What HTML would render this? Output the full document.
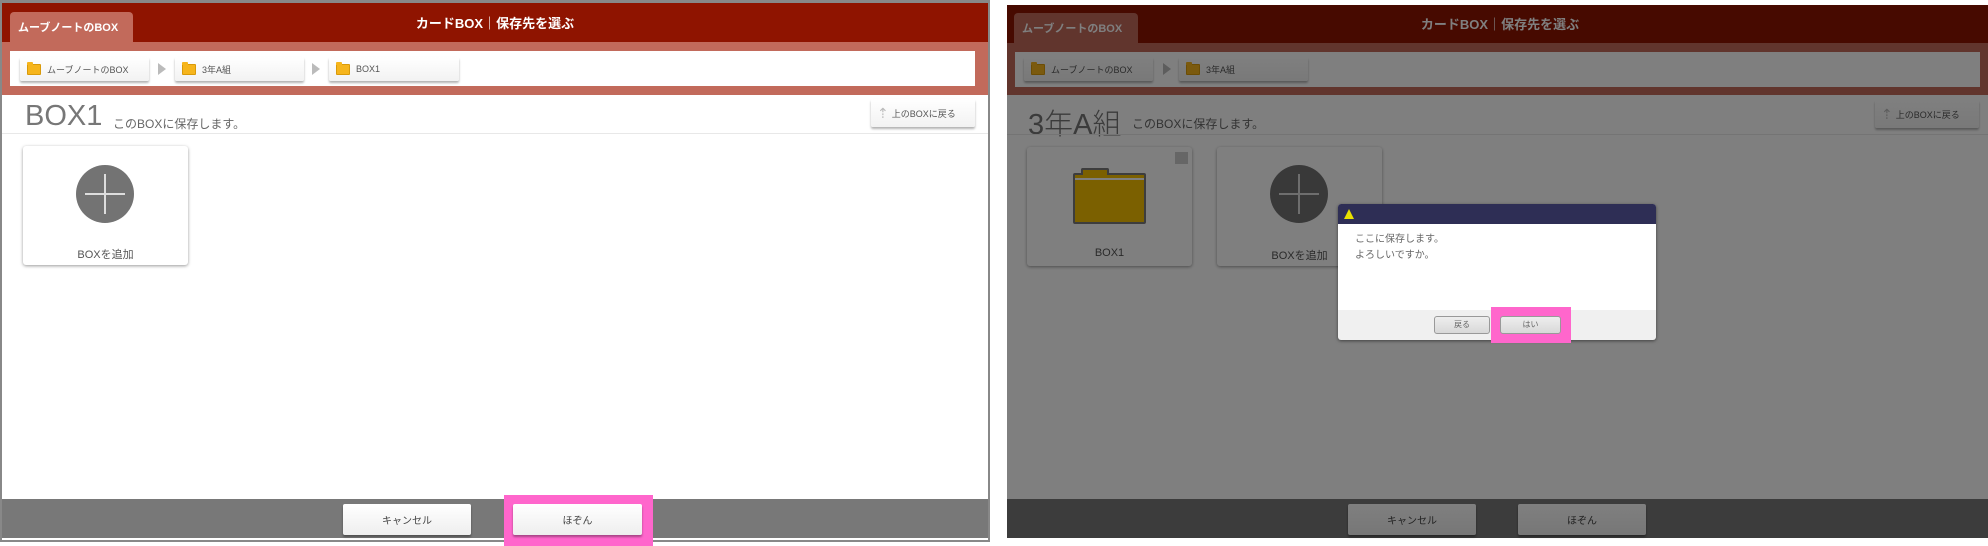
<!DOCTYPE html>
<html><head><meta charset="utf-8"><style>
*{box-sizing:border-box;margin:0;padding:0}
body{width:1988px;height:546px;background:#fff;position:relative;overflow:hidden;font-family:"Liberation Sans","Noto Sans CJK JP",sans-serif}
.abs{position:absolute}
.hdr{background:#8f1400}
.tab{background:#c26a5b;border-radius:4px 4px 0 0;color:#fff;font-size:11px;font-weight:bold;display:flex;align-items:center;padding-left:8px}
.title{color:#fff;font-size:13px;font-weight:bold;text-align:center}
.band{background:#c26a5b}
.crumb{background:linear-gradient(#fff,#f2f2f2);border-radius:2px;box-shadow:0 2px 2px rgba(0,0,0,.3);font-size:9px;color:#555;display:flex;align-items:center;padding-left:7px}
.fold{width:14px;height:11px;background:#f6b51c;border-radius:1px;margin-right:6px;position:relative;border:1px solid #d99a0a}
.fold:before{content:"";position:absolute;left:-1px;top:-3px;width:6px;height:3px;background:#f6b51c;border-radius:1px 1px 0 0}
.arr{width:0;height:0;border-left:8px solid #bbb;border-top:6px solid transparent;border-bottom:6px solid transparent}
.card{background:#fff;border-radius:3px;box-shadow:0 1px 3px rgba(0,0,0,.4)}
.btn{background:linear-gradient(#fff,#eee);box-shadow:0 2px 2px rgba(0,0,0,.35);font-size:10px;color:#444;display:flex;align-items:center;justify-content:center;border-radius:2px}
</style></head><body>
<!-- LEFT -->
<div class="abs" style="left:0;top:0;width:990px;height:542px;border:2px solid #888;border-top-width:3px;background:#fff"></div>
<div class="abs hdr" style="left:2px;top:3px;width:986px;height:39px"></div>
<div class="abs tab" style="left:10px;top:12px;width:123px;height:30px">ムーブノートのBOX</div>
<div class="abs title" style="left:300px;top:13px;width:390px">カードBOX｜保存先を選ぶ</div>
<div class="abs band" style="left:2px;top:42px;width:986px;height:53px"></div>
<div class="abs" style="left:10px;top:51px;width:965px;height:35px;background:#fff"></div>
<div class="abs crumb" style="left:20px;top:57px;width:129px;height:24px"><span class="fold"></span>ムーブノートのBOX</div>
<div class="abs arr" style="left:158px;top:63px"></div>
<div class="abs crumb" style="left:175px;top:57px;width:129px;height:24px"><span class="fold"></span>3年A組</div>
<div class="abs arr" style="left:312px;top:63px"></div>
<div class="abs crumb" style="left:329px;top:57px;width:130px;height:24px"><span class="fold"></span>BOX1</div>
<div class="abs" style="left:25px;top:100px;font-size:29px;color:#777;font-weight:300">BOX1</div>
<div class="abs" style="left:113px;top:115px;font-size:12px;color:#666">このBOXに保存します。</div>
<div class="abs crumb" style="left:871px;top:99px;width:104px;height:28px;font-size:9px;padding-left:6px"><span style="color:#bbb;font-size:14px;margin-right:3px">⇡</span>上のBOXに戻る</div>
<div class="abs" style="left:2px;top:133px;width:986px;height:1px;background:#e8e8e8"></div>
<div class="abs card" style="left:23px;top:146px;width:165px;height:119px"></div>
<div class="abs" style="left:76px;top:165px;width:58px;height:58px;border-radius:50%;background:#737373"></div>
<div class="abs" style="left:85px;top:193px;width:40px;height:2px;background:#ddd"></div>
<div class="abs" style="left:104px;top:174px;width:2px;height:40px;background:#ddd"></div>
<div class="abs" style="left:23px;top:246px;width:165px;text-align:center;font-size:11px;color:#555">BOXを追加</div>
<div class="abs" style="left:2px;top:499px;width:986px;height:39px;background:#787878"></div>
<div class="abs btn" style="left:343px;top:504px;width:128px;height:31px">キャンセル</div>
<div class="abs" style="left:504px;top:495px;width:149px;height:51px;background:#ff66cc"></div>
<div class="abs btn" style="left:513px;top:504px;width:129px;height:31px">ほぞん</div>

<!-- RIGHT -->
<div class="abs hdr" style="left:1007px;top:5px;width:981px;height:38px"></div>
<div class="abs tab" style="left:1014px;top:13px;width:124px;height:30px">ムーブノートのBOX</div>
<div class="abs title" style="left:1300px;top:14px;width:400px">カードBOX｜保存先を選ぶ</div>
<div class="abs band" style="left:1007px;top:43px;width:981px;height:52px"></div>
<div class="abs" style="left:1015px;top:52px;width:965px;height:35px;background:#fff"></div>
<div class="abs crumb" style="left:1024px;top:57px;width:129px;height:24px"><span class="fold"></span>ムーブノートのBOX</div>
<div class="abs arr" style="left:1163px;top:63px"></div>
<div class="abs crumb" style="left:1179px;top:57px;width:129px;height:24px"><span class="fold"></span>3年A組</div>
<div class="abs" style="left:1007px;top:95px;width:981px;height:404px;background:#fff"></div>
<div class="abs" style="left:1028px;top:101px;font-size:29px;color:#777;font-weight:300">3年A組</div>
<div class="abs" style="left:1132px;top:115px;font-size:12px;color:#666">このBOXに保存します。</div>
<div class="abs crumb" style="left:1875px;top:100px;width:104px;height:28px;padding-left:6px"><span style="color:#bbb;font-size:14px;margin-right:3px">⇡</span>上のBOXに戻る</div>
<div class="abs" style="left:1007px;top:134px;width:981px;height:1px;background:#e8e8e8"></div>
<div class="abs card" style="left:1027px;top:147px;width:165px;height:119px"></div>
<div class="abs" style="left:1175px;top:152px;width:13px;height:12px;background:#ccc"></div>
<div class="abs" style="left:1073px;top:173px;width:73px;height:51px;background:#f6c000;border:2px solid #7a7a7a;border-radius:2px"></div>
<div class="abs" style="left:1081px;top:168px;width:28px;height:7px;background:#f6c000;border:2px solid #7a7a7a;border-bottom:none;border-radius:2px 2px 0 0"></div>
<div class="abs" style="left:1075px;top:178px;width:69px;height:2px;background:#fff"></div>
<div class="abs" style="left:1027px;top:247px;width:165px;text-align:center;font-size:11px;color:#555">BOX1</div>
<div class="abs card" style="left:1217px;top:147px;width:165px;height:119px"></div>
<div class="abs" style="left:1270px;top:165px;width:58px;height:58px;border-radius:50%;background:#737373"></div>
<div class="abs" style="left:1279px;top:193px;width:40px;height:2px;background:#ddd"></div>
<div class="abs" style="left:1298px;top:174px;width:2px;height:40px;background:#ddd"></div>
<div class="abs" style="left:1217px;top:247px;width:165px;text-align:center;font-size:11px;color:#555">BOXを追加</div>
<div class="abs" style="left:1007px;top:499px;width:981px;height:39px;background:#787878"></div>
<div class="abs btn" style="left:1348px;top:504px;width:128px;height:31px">キャンセル</div>
<div class="abs btn" style="left:1518px;top:504px;width:128px;height:31px">ほぞん</div>
<!-- overlay -->
<div class="abs" style="left:1007px;top:5px;width:981px;height:533px;background:rgba(0,0,0,.5)"></div>
<!-- dialog -->
<div class="abs" style="left:1338px;top:204px;width:318px;height:136px;background:#f0f0f0;border-radius:3px;box-shadow:0 1px 3px rgba(0,0,0,.5);overflow:hidden">
 <div style="height:20px;background:#2e2e55;position:relative"><div class="abs" style="left:6px;top:5px;width:0;height:0;border-left:5px solid transparent;border-right:5px solid transparent;border-bottom:10px solid #e8e000"></div></div>
 <div style="height:86px;background:#fff;padding:8px 0 0 17px;font-size:10px;color:#666;line-height:16px">ここに保存します。<br>よろしいですか。</div>
</div>
<div class="abs" style="left:1434px;top:316px;width:56px;height:18px;border:1px solid #999;border-radius:3px;background:linear-gradient(#eee,#d8d8d8);font-size:8px;color:#666;text-align:center;line-height:16px">戻る</div>
<div class="abs" style="left:1491px;top:307px;width:80px;height:36px;background:#ff66cc"></div>
<div class="abs" style="left:1500px;top:316px;width:61px;height:18px;border:1px solid #999;border-radius:3px;background:linear-gradient(#eee,#d8d8d8);font-size:8px;color:#666;text-align:center;line-height:16px">はい</div>
</body></html>
